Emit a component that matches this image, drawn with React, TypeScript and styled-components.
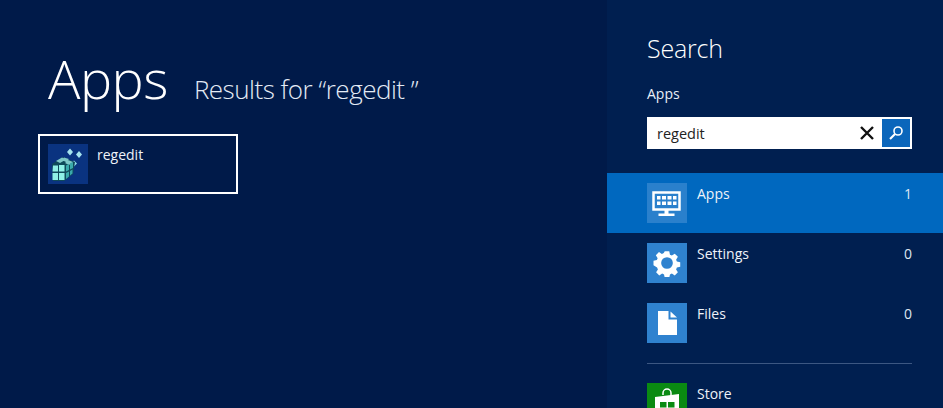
import React from 'react';
import styled, { createGlobalStyle } from 'styled-components';

const GlobalStyle = createGlobalStyle`
  html, body {
    margin: 0;
    padding: 0;
    height: 100%;
    overflow: hidden;
    background: #001a49;
  }
  * {
    box-sizing: border-box;
  }
`;

const Screen = styled.div`
  display: flex;
  width: 943px;
  height: 408px;
  overflow: hidden;
  font-family: "Open Sans", "Noto Sans", sans-serif;
  color: #fff;
`;

const Results = styled.main`
  flex: 0 0 607px;
  background: #001a49;
  padding: 39px 0 0 38px;
`;

const Heading = styled.div`
  display: flex;
  align-items: baseline;
  gap: 26px;
  padding-left: 10px;
  height: 95px;
`;

const HeadingTitle = styled.h1`
  margin: 0;
  font-size: 54px;
  line-height: 78px;
  font-weight: 300;
  letter-spacing: -0.5px;
`;

const HeadingQuery = styled.h2`
  margin: 0;
  font-size: 26px;
  font-weight: 300;
  letter-spacing: -0.5px;
  color: #e4ebf5;
`;

const ResultTile = styled.div`
  display: flex;
  gap: 9px;
  width: 200px;
  height: 60px;
  padding: 8px;
  border: 2px solid #fff;
`;

const ResultIcon = styled.div`
  flex: 0 0 40px;
  height: 40px;
  background: #0a3380;
`;

const ResultName = styled.span`
  font-size: 14px;
  line-height: 20px;
  margin-top: 1px;
  color: #eef2f8;
`;

const Pane = styled.aside`
  flex: 1;
  background: #001f50;
  padding-top: 30px;
`;

const PaneHeader = styled.div`
  padding: 0 31px 0 40px;
`;

const PaneTitle = styled.h2`
  margin: 0;
  font-size: 25px;
  line-height: 36px;
  font-weight: 300;
  letter-spacing: -0.2px;
`;

const ScopeLabel = styled.div`
  margin-top: 19px;
  font-size: 14px;
  line-height: 18px;
  color: #e9eef6;
`;

const SearchBox = styled.div`
  display: flex;
  align-items: center;
  height: 32px;
  margin-top: 14px;
  padding: 0 2px 0 10px;
  background: #fff;
`;

const SearchText = styled.span`
  flex: 1;
  font-size: 14.5px;
  color: #222;
`;

const ClearButton = styled.span`
  display: flex;
  width: 30px;
  justify-content: center;
`;

const SearchButton = styled.span`
  display: flex;
  align-items: center;
  justify-content: center;
  width: 28px;
  height: 28px;
  background: #0b66bb;
`;

const Category = styled.div<{ $active?: boolean }>`
  display: flex;
  height: 60px;
  margin-top: ${p => (p.$active ? '24px' : '0')};
  padding: 10px 31px 10px 40px;
  background: ${p => (p.$active ? '#0068bf' : 'transparent')};
`;

const CategoryIcon = styled.div<{ $color: string }>`
  display: flex;
  align-items: center;
  justify-content: center;
  flex: 0 0 40px;
  height: 40px;
  background: ${p => p.$color};
`;

const CategoryName = styled.span`
  flex: 1;
  margin-left: 10px;
  margin-top: 1px;
  font-size: 14px;
  line-height: 20px;
  color: #eef2f8;
`;

const CategoryCount = styled.span`
  margin-top: 1px;
  font-size: 14px;
  line-height: 20px;
  color: #dfe7f2;
`;

const Divider = styled.hr`
  margin: 10px 31px 9px 40px;
  border: 0;
  border-top: 1px solid #3c5782;
`;

const RegistryIcon = () => (
  <svg width="40" height="40" viewBox="0 0 40 40">
    <path d="M22 4.500l3 3.500-3 3.500-3-3.500zM31 7l3 3.500-3 3.500-3-3.500z" fill="#a6e4ee" />
    <path d="M26 16.500l3 3-3 3-3-3z" fill="#8fdfe8" />
    <path d="M4 20l11-7 12 5-2 12-9 7H5z" fill="#0f4a5a" />
    <path d="M8 17l6-3.500 4 2-6 3.500zM16 13.500l5 1.500-3 3-4-2zM20 16l5 2-4 3-4-2z" fill="#7fc8c8" />
    <path d="M5 21.500h5v6H4.500zM11 21h5.500v6.500H11zM4.500 29H10v7H4.500zM11 29h5.500v7H11z" fill="#8ff0e6" />
    <path d="M18 21.500l3-1.500v6l-3 1.500zM22 19.500l3-1.500v6l-3 1.500zM18 29l3-1.500v5l-3 2.500zM22 27l2.500-1.500v4L22 31.500z" fill="#3aa9ab" />
  </svg>
);

const KeyboardIcon = () => (
  <svg width="30" height="30" viewBox="0 0 30 30">
    <path d="M1.500 4.500h26v17h-26z" fill="none" stroke="#fff" strokeWidth="2.500" />
    <path d="M5 8h3.500v3.500H5zM10 8h4v3.500h-4zM15.500 8h4v3.500h-4zM21 8h3.500v3.500H21zM5 13.500h3.500V17H5zM10 13.500h4V17h-4zM15.500 13.500h4V17h-4zM21 13.500h3.500V17H21z" fill="#fff" />
    <path d="M12.500 22h4v3.500h6v2.500h-16v-2.500h6z" fill="#fff" />
  </svg>
);

const GearIcon = () => (
  <svg width="28" height="28" viewBox="0 0 28 28">
    <path
      fillRule="evenodd"
      fill="#fff"
      d="M11.500 1h5l.8 3.700 2.100.9 3.200-2 3.500 3.500-2 3.200.9 2.100 3.700.8v5l-3.700.8-.9 2.100 2 3.200-3.500 3.500-3.200-2-2.100.9-.8 3.700h-5l-.8-3.700-2.100-.9-3.200 2-3.500-3.500 2-3.200-.9-2.100L-1 16.500v-5l3.700-.8.9-2.100-2-3.200 3.500-3.500 3.200 2 2.100-.9zM14 7.500a6.500 6.500 0 1 0 0 13 6.500 6.500 0 0 0 0-13z"
      transform="translate(1.400 1.400) scale(0.9)"
    />
  </svg>
);

const FileIcon = () => (
  <svg width="19" height="24" viewBox="0 0 19 24">
    <path d="M0 0h10.500v8.500H19V24H0z" fill="#fff" />
    <path d="M12.500 0.500L19 6.500h-6.500z" fill="#fff" />
  </svg>
);

const StoreIcon = () => (
  <svg width="26" height="34" viewBox="0 0 26 34" style={{ marginTop: 4 }}>
    <path d="M9 7V5a4 4 0 0 1 8 0v3" fill="none" stroke="#fff" strokeWidth="1.500" />
    <path d="M1 9l24-3v28H1z" fill="#fff" />
    <path d="M6 14h6.500v5.500H6zM14 14h6.500v5.500H14zM6 21h6.500v5.500H6zM14 21h6.500v5.500H14z" fill="#0a8a12" />
  </svg>
);

const App: React.FC = () => {
  return (
    <>
      <GlobalStyle />
      <Screen>
        <Results>
          <Heading>
            <HeadingTitle>Apps</HeadingTitle>
            <HeadingQuery>Results for “regedit ”</HeadingQuery>
          </Heading>
          <ResultTile>
            <ResultIcon>
              <RegistryIcon />
            </ResultIcon>
            <ResultName>regedit</ResultName>
          </ResultTile>
        </Results>
        <Pane>
          <PaneHeader>
            <PaneTitle>Search</PaneTitle>
            <ScopeLabel>Apps</ScopeLabel>
            <SearchBox>
              <SearchText>regedit</SearchText>
              <ClearButton>
                <svg width="14" height="14" viewBox="0 0 14 14">
                  <path d="M1 1l12 12M13 1L1 13" stroke="#111" strokeWidth="2.400" />
                </svg>
              </ClearButton>
              <SearchButton>
                <svg width="16" height="16" viewBox="0 0 16 16">
                  <circle cx="10" cy="6" r="4" fill="none" stroke="#fff" strokeWidth="1.600" />
                  <path d="M7 9l-5 5" stroke="#fff" strokeWidth="2.200" />
                </svg>
              </SearchButton>
            </SearchBox>
          </PaneHeader>
          <Category $active>
            <CategoryIcon $color="#2a80cc">
              <KeyboardIcon />
            </CategoryIcon>
            <CategoryName>Apps</CategoryName>
            <CategoryCount>1</CategoryCount>
          </Category>
          <Category>
            <CategoryIcon $color="#2f82cf">
              <GearIcon />
            </CategoryIcon>
            <CategoryName>Settings</CategoryName>
            <CategoryCount>0</CategoryCount>
          </Category>
          <Category>
            <CategoryIcon $color="#2f82cf">
              <FileIcon />
            </CategoryIcon>
            <CategoryName>Files</CategoryName>
            <CategoryCount>0</CategoryCount>
          </Category>
          <Divider />
          <Category>
            <CategoryIcon $color="#0a8a12">
              <StoreIcon />
            </CategoryIcon>
            <CategoryName>Store</CategoryName>
          </Category>
        </Pane>
      </Screen>
    </>
  );
};

export default App;
